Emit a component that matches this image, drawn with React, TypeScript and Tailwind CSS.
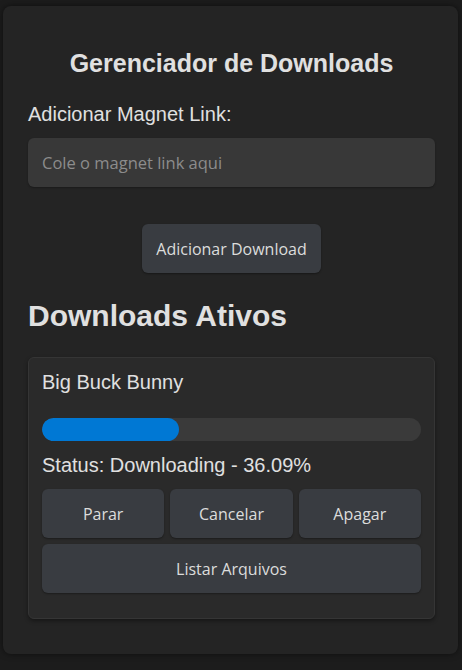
const btn =
  "h-[49px] rounded-md bg-[#393c41] text-[#dcdcdc] text-[16px] font-['Open_Sans',sans-serif] shadow-[0_1px_2px_rgba(0,0,0,0.35)]";

export default function App() {
  const progress = 36.09;

  return (
    <div className="min-h-[670px] w-[462px] bg-[#1c1c1c] pt-[6px] pl-[3px] font-['Liberation_Sans',Arial,sans-serif] text-[#e0e0e0]">
      <div className="w-[455px] h-[648px] rounded-lg bg-[#242424] pl-[25px] pr-[23px] pt-[45px] shadow-[0_0_6px_rgba(0,0,0,0.5)]">
        <h1 className="text-center text-[25px] font-bold leading-[24px]">Gerenciador de Downloads</h1>

        <label className="block mt-[29px] text-[20px] leading-[20px]">Adicionar Magnet Link:</label>
        <input
          type="text"
          placeholder="Cole o magnet link aqui"
          className="mt-[14px] block w-full h-[49px] rounded-md bg-[#383838] px-[14px] text-[16.5px] font-['Open_Sans',sans-serif] text-[#e0e0e0] placeholder:text-[#8c8c8c] outline-none shadow-[0_1px_2px_rgba(0,0,0,0.3)]"
        />

        <div className="flex justify-center mt-[37px]">
          <button className={btn + " w-[179px]"}>Adicionar Download</button>
        </div>

        <h2 className="mt-[27px] text-[30px] font-bold leading-[32px]">Downloads Ativos</h2>

        <div className="mt-[25px] h-[262px] rounded-md border border-[#353535] bg-[#2a2a2a] px-[13px] pt-[13px] shadow-[0_2px_4px_rgba(0,0,0,0.4)]">
          <div className="text-[20px] leading-[22px]">Big Buck Bunny</div>

          <div className="mt-[25px] h-[23px] rounded-full bg-[#3a3a3a] overflow-hidden">
            <div className="h-full rounded-full bg-[#0078d4]" style={{ width: `${progress}%` }} />
          </div>

          <div className="mt-[13px] text-[20px] leading-[22px]">Status: Downloading - {progress}%</div>

          <div className="mt-[13px] grid grid-cols-3 gap-[6px]">
            <button className={btn}>Parar</button>
            <button className={btn}>Cancelar</button>
            <button className={btn}>Apagar</button>
          </div>
          <button className={btn + " mt-[6px] w-full"}>Listar Arquivos</button>
        </div>
      </div>
    </div>
  );
}
